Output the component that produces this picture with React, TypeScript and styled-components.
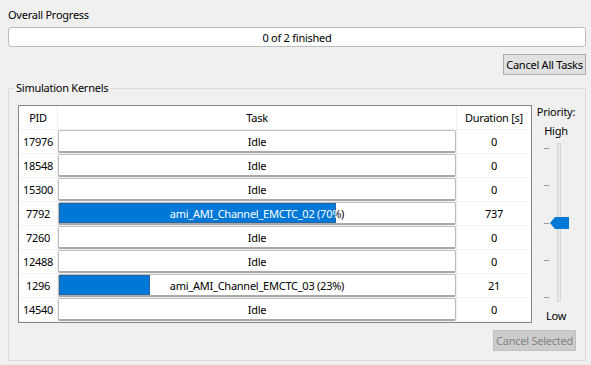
import React from "react";
import styled, { createGlobalStyle } from "styled-components";

interface Kernel {
  pid: number;
  task: string;
  progress: number;
  duration: number;
}

const kernels: Kernel[] = [
  { pid: 17976, task: "Idle", progress: 0, duration: 0 },
  { pid: 18548, task: "Idle", progress: 0, duration: 0 },
  { pid: 15300, task: "Idle", progress: 0, duration: 0 },
  { pid: 7792, task: "ami_AMI_Channel_EMCTC_02 (70%)", progress: 70, duration: 737 },
  { pid: 7260, task: "Idle", progress: 0, duration: 0 },
  { pid: 12488, task: "Idle", progress: 0, duration: 0 },
  { pid: 1296, task: "ami_AMI_Channel_EMCTC_03 (23%)", progress: 23, duration: 21 },
  { pid: 14540, task: "Idle", progress: 0, duration: 0 },
];

const GlobalStyle = createGlobalStyle`
  html, body {
    margin: 0;
    padding: 0;
    background: #f0f0f0;
  }
  body {
    font-family: "Noto Sans", "Liberation Sans", sans-serif;
    font-size: 11px;
    letter-spacing: -0.25px;
    color: #000;
  }
`;

const Window = styled.div`
  width: 591px;
  height: 365px;
  box-sizing: border-box;
  padding: 7px 5px 0 8px;
  display: flex;
  flex-direction: column;
`;

const Label = styled.div`
  line-height: 16px;
  height: 16px;
  white-space: nowrap;
`;

const OverallBar = styled.div`
  margin-top: 4px;
  height: 20px;
  box-sizing: border-box;
  background: #fff;
  border: 1px solid #bcbcbc;
  border-radius: 3px;
  display: flex;
  align-items: center;
  justify-content: center;
`;

const ButtonRow = styled.div<{ $gap: number; $right?: number }>`
  display: flex;
  justify-content: flex-end;
  margin-top: ${(p) => p.$gap}px;
  margin-right: ${(p) => p.$right ?? 0}px;
`;

const Button = styled.button<{ $disabled?: boolean }>`
  width: 83px;
  height: 21px;
  padding: 0;
  font: inherit;
  letter-spacing: inherit;
  box-sizing: border-box;
  background: ${(p) => (p.$disabled ? "#cccccc" : "#e1e1e1")};
  border: 1px solid ${(p) => (p.$disabled ? "#bfbfbf" : "#adadad")};
  color: ${(p) => (p.$disabled ? "#838383" : "#000")};
  white-space: nowrap;
`;

const Group = styled.fieldset`
  margin: 6px 0 0 0;
  padding: 10px 0 9px 9px;
  border: 1px solid #dcdcdc;
  min-width: 0;
`;

const GroupTitle = styled.legend`
  padding: 0 2px;
  margin-left: -4px;
  line-height: 14px;
`;

const Body = styled.div`
  display: flex;
`;

const Table = styled.div`
  width: 514px;
  box-sizing: border-box;
  border: 1px solid #828790;
  background: #f0f0f0;
  display: grid;
  grid-template-columns: 38px 398px 74px;
  grid-auto-rows: 23px;
  gap: 1px;
`;

const Cell = styled.div`
  background: #fff;
  display: flex;
  align-items: center;
  justify-content: center;
  white-space: nowrap;
`;

const TaskBar = styled.div`
  position: relative;
  width: 100%;
  height: 100%;
  box-sizing: border-box;
  background: #fff;
  border: 1px solid #bcbcbc;
  border-bottom: 2px solid #a9a9a9;
  border-radius: 2px;
  overflow: hidden;
`;

const BarFill = styled.div`
  position: absolute;
  left: 0;
  top: 0;
  bottom: 0;
  background: #0078d7;
  box-shadow: inset 0 0 0 1px #2566a6;
`;

// text laid over the bar, split in colour at the fill edge
const BarText = styled.div<{ $light?: boolean }>`
  position: absolute;
  inset: 0;
  display: flex;
  align-items: center;
  justify-content: center;
  white-space: nowrap;
  color: ${(p) => (p.$light ? "#fff" : "#000")};
`;

const PriorityColumn = styled.div`
  width: 53px;
  display: flex;
  flex-direction: column;
  align-items: stretch;
`;

const PriorityText = styled.div<{ $top: number }>`
  margin-top: ${(p) => p.$top}px;
  padding-right: 5px;
  line-height: 14px;
  text-align: center;
  white-space: nowrap;
`;

const SliderSvg = styled.svg`
  display: block;
`;

const ProgressCell: React.FC<{ kernel: Kernel }> = ({ kernel }) => {
  const p = kernel.progress;
  return (
    <Cell>
      <TaskBar>
        {p > 0 && <BarFill style={{ width: `${p}%` }} />}
        <BarText style={p > 0 ? { clipPath: `inset(0 0 0 ${p}%)` } : undefined}>
          {kernel.task}
        </BarText>
        {p > 0 && (
          <BarText $light style={{ clipPath: `inset(0 ${100 - p}% 0 0)` }}>
            {kernel.task}
          </BarText>
        )}
      </TaskBar>
    </Cell>
  );
};

const PrioritySlider: React.FC = () => {
  const ticks = [10, 47, 85, 122, 159];
  return (
    <SliderSvg width="53" height="171" viewBox="0 0 53 171">
      <rect x="25.5" y="5.5" width="3" height="158" fill="#e7eaea" stroke="#d6d6d6" />
      {ticks.map((y) => (
        <line key={y} x1="12" x2="17" y1={y + 0.5} y2={y + 0.5} stroke="#9a9a9a" />
      ))}
      <polygon points="18,85 23,79 37,79 37,91 23,91" fill="#0078d7" />
    </SliderSvg>
  );
};

const App: React.FC = () => (
  <>
    <GlobalStyle />
    <Window>
      <Label>Overall Progress</Label>
      <OverallBar>0 of 2 finished</OverallBar>
      <ButtonRow $gap={7}>
        <Button>Cancel All Tasks</Button>
      </ButtonRow>
      <Group>
        <GroupTitle>Simulation Kernels</GroupTitle>
        <Body>
          <Table>
            <Cell>PID</Cell>
            <Cell>Task</Cell>
            <Cell>Duration [s]</Cell>
            {kernels.map((k) => (
              <React.Fragment key={k.pid}>
                <Cell>{k.pid}</Cell>
                <ProgressCell kernel={k} />
                <Cell>{k.duration}</Cell>
              </React.Fragment>
            ))}
          </Table>
          <PriorityColumn>
            <PriorityText $top={0}>Priority:</PriorityText>
            <PriorityText $top={5}>High</PriorityText>
            <PrioritySlider />
            <PriorityText $top={0}>Low</PriorityText>
          </PriorityColumn>
        </Body>
        <ButtonRow $gap={7} $right={9}>
          <Button $disabled disabled>
            Cancel Selected
          </Button>
        </ButtonRow>
      </Group>
    </Window>
  </>
);

export default App;
